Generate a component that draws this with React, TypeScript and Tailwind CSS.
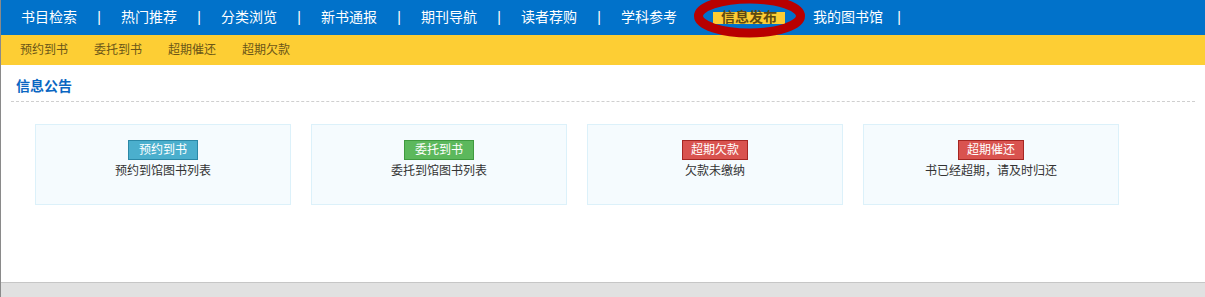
import React from "react";

const navItems = [
  { label: "书目检索", cls: "pl-[20px] pr-[20px]" },
  { label: "热门推荐", cls: "pl-[20px] pr-[20px]" },
  { label: "分类浏览", cls: "pl-[20px] pr-[20px]" },
  { label: "新书通报", cls: "pl-[20px] pr-[20px]" },
  { label: "期刊导航", cls: "pl-[20px] pr-[20px]" },
  { label: "读者荐购", cls: "pl-[20px] pr-[20px]" },
  { label: "学科参考", cls: "pl-[20px] pr-[20px]" },
  { label: "信息发布", cls: "pl-[12px] pr-[28px]", active: true },
  { label: "我的图书馆", cls: "pl-0 pr-[14px]" },
];

const subItems = ["预约到书", "委托到书", "超期催还", "超期欠款"];

const cards = [
  {
    badge: "预约到书",
    text: "预约到馆图书列表",
    badgeCls: "w-[70px] bg-[#4bafcd] border-[#2b88a6]",
  },
  {
    badge: "委托到书",
    text: "委托到馆图书列表",
    badgeCls: "w-[70px] bg-[#5cb85c] border-[#3f9a3f]",
  },
  {
    badge: "超期欠款",
    text: "欠款未缴纳",
    badgeCls: "w-[66px] bg-[#d9534f] border-[#a52622]",
  },
  {
    badge: "超期催还",
    text: "书已经超期，请及时归还",
    badgeCls: "w-[66px] bg-[#d9534f] border-[#a52622]",
  },
];

export default function App() {
  return (
    <div className="flex min-h-[297px] flex-col border-l border-[#8a8a8a] bg-white font-['Liberation_Sans','Noto_Sans_CJK_SC',sans-serif]">
      {/* top nav */}
      <div className="relative z-10 flex h-[35px] items-center bg-[#0172ca] text-[14px] text-white">
        {navItems.map((item, i) => (
          <React.Fragment key={i}>
            <div className={item.cls}>
              {item.active ? (
                <span className="inline-flex h-[12px] items-center bg-[#fdce34] px-[8px] text-[14px] font-bold text-[#5e4a12]">
                  {item.label}
                </span>
              ) : (
                <span className="leading-[35px]">{item.label}</span>
              )}
            </div>
            {!item.active && <span className="inline-block w-[4px] text-center leading-[35px]">|</span>}
          </React.Fragment>
        ))}
        {/* annotation ellipse */}
        <svg
          className="pointer-events-none absolute top-[-6px] left-[689px] overflow-visible"
          width="118"
          height="50"
          viewBox="0 0 118 50"
        >
          <ellipse cx="59.5" cy="22" rx="51" ry="17" fill="none" stroke="#b80000" strokeWidth="9" />
        </svg>
      </div>

      {/* sub nav */}
      <div className="flex h-[30px] items-center gap-[26px] bg-[#fdce34] pl-[19px] text-[12px] text-[#6b5618]">
        {subItems.map((s) => (
          <span key={s}>{s}</span>
        ))}
      </div>

      {/* content */}
      <div className="flex-1 px-[10px]">
        <div className="h-[37px] border-b border-dashed border-[#cfcfcf] pt-[12px] pl-[5px] text-[14px] leading-[18px] font-bold text-[#0a66c2]">
          信息公告
        </div>
        <div className="flex gap-[20px] pt-[22px] pl-[24px]">
          {cards.map((c) => (
            <div
              key={c.badge}
              className="flex h-[81px] w-[256px] flex-col items-center border border-[#dcf1fa] bg-[#f5fbfe] pt-[15px]"
            >
              <span
                className={`block h-[20px] border text-center text-[12px] leading-[18px] text-white ${c.badgeCls}`}
              >
                {c.badge}
              </span>
              <span className="mt-[1px] text-[12px] leading-[20px] text-[#333]">{c.text}</span>
            </div>
          ))}
        </div>
      </div>

      {/* bottom bar */}
      <div className="h-[15px] border-t border-[#c6c6c6] bg-[#e1e1e1]" />
    </div>
  );
}
